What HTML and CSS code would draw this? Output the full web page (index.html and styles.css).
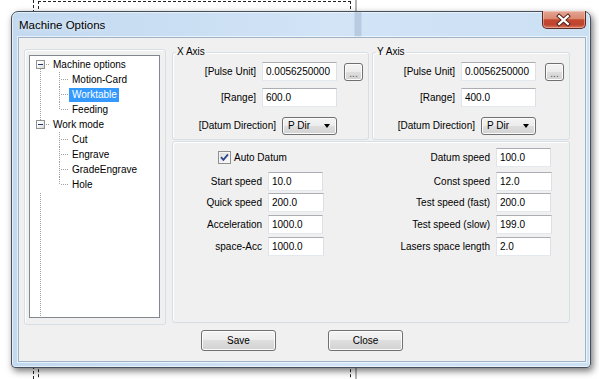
FILE: index.html
```html
<!DOCTYPE html>
<html>
<head>
  <title>Machine Options</title>
  <link rel="stylesheet" href="styles.css">
</head>
<body>
  <div class="desk">
    <div class="sheet"></div>
    <div class="sheet-margin"></div>
    <div class="sheet-edge"></div>

    <div class="window">
      <div class="titlebar">
        <span class="title">Machine Options</span>
        <button class="close-btn" title="Close">
          <svg width="44" height="18" viewBox="0 0 44 18">
            <path d="M17.5 5 L26.5 13 M26.5 5 L17.5 13" stroke="#4a1f18" stroke-width="4.2" stroke-linecap="square"/>
            <path d="M17.5 5 L26.5 13 M26.5 5 L17.5 13" stroke="#ffffff" stroke-width="2.2" stroke-linecap="square"/>
          </svg>
        </button>
      </div>

      <div class="client">
        <div class="main">
          <div class="tree-frame">
            <div class="tree">
              <div class="node">
                <div class="row"><span class="expander"></span><span class="stub"></span><span class="label">Machine options</span></div>
                <div class="kids">
                  <div class="row"><span class="branch"></span><span class="label">Motion-Card</span></div>
                  <div class="row"><span class="branch"></span><span class="label selected">Worktable</span></div>
                  <div class="row"><span class="branch"></span><span class="label">Feeding</span></div>
                </div>
              </div>
              <div class="node">
                <div class="row"><span class="expander"></span><span class="stub"></span><span class="label">Work mode</span></div>
                <div class="kids">
                  <div class="row"><span class="branch"></span><span class="label">Cut</span></div>
                  <div class="row"><span class="branch"></span><span class="label">Engrave</span></div>
                  <div class="row"><span class="branch"></span><span class="label">GradeEngrave</span></div>
                  <div class="row"><span class="branch"></span><span class="label">Hole</span></div>
                </div>
              </div>
            </div>
          </div>

          <div class="settings">
            <div class="axes">
              <fieldset class="group axis axis-x">
                <legend>X Axis</legend>
                <div class="field">
                  <label>[Pulse Unit]</label>
                  <input class="text-box wide" type="text" value="0.0056250000">
                  <button class="more-btn">...</button>
                </div>
                <div class="field">
                  <label>[Range]</label>
                  <input class="text-box wide" type="text" value="600.0">
                  <span class="btn-slot"></span>
                </div>
                <div class="field field-combo">
                  <label>[Datum Direction]</label>
                  <div class="combo">P Dir<span class="arrow"></span></div>
                  <span class="btn-slot"></span>
                </div>
              </fieldset>

              <fieldset class="group axis axis-y">
                <legend>Y Axis</legend>
                <div class="field">
                  <label>[Pulse Unit]</label>
                  <input class="text-box wide" type="text" value="0.0056250000">
                  <button class="more-btn">...</button>
                </div>
                <div class="field">
                  <label>[Range]</label>
                  <input class="text-box wide" type="text" value="400.0">
                  <span class="btn-slot"></span>
                </div>
                <div class="field field-combo">
                  <label>[Datum Direction]</label>
                  <div class="combo">P Dir<span class="arrow"></span></div>
                  <span class="btn-slot"></span>
                </div>
              </fieldset>
            </div>

            <div class="group speeds">
              <div class="check-cell">
                <span class="checkbox">
                  <svg width="9" height="9" viewBox="0 0 9 9"><path d="M1 4.2 L3.4 6.8 L8 1.4" fill="none" stroke="#2c4a8c" stroke-width="1.9"/></svg>
                </span>
                <span>Auto Datum</span>
              </div>
              <label class="r-label">Datum speed</label>
              <input class="text-box" type="text" value="100.0">

              <label>Start speed</label>
              <input class="text-box" type="text" value="10.0">
              <span></span>
              <label class="r-label">Const speed</label>
              <input class="text-box" type="text" value="12.0">

              <label>Quick speed</label>
              <input class="text-box" type="text" value="200.0">
              <span></span>
              <label class="r-label">Test speed (fast)</label>
              <input class="text-box" type="text" value="200.0">

              <label>Acceleration</label>
              <input class="text-box" type="text" value="1000.0">
              <span></span>
              <label class="r-label">Test speed (slow)</label>
              <input class="text-box" type="text" value="199.0">

              <label>space-Acc</label>
              <input class="text-box" type="text" value="1000.0">
              <span></span>
              <label class="r-label">Lasers space length</label>
              <input class="text-box" type="text" value="2.0">
            </div>
          </div>
        </div>

        <div class="actions">
          <button class="push-btn">Save</button>
          <button class="push-btn">Close</button>
        </div>
      </div>
    </div>
  </div>
</body>
</html>
```

FILE: styles.css
```css
body {
  margin: 0;
  background-color: #fff;
  font-family: "Liberation Sans", Arial, sans-serif;
  font-size: 10px;
  color: #000;
}

.desk {
  position: relative;
  width: 599px;
  height: 379px;
  overflow: hidden;
}

/* page outline of the document behind the dialog */
.sheet {
  position: absolute;
  left: 38px;
  top: 1px;
  width: 311px;
  height: 420px;
  border: 1px dashed #222;
  border-bottom: none;
}

.sheet-margin {
  position: absolute;
  left: 33px;
  top: 0;
  height: 379px;
  border-left: 1px dashed #222;
}

.sheet-edge {
  position: absolute;
  left: 355px;
  top: 0;
  width: 2px;
  height: 379px;
  background-color: #b4b4b4;
}

/* dialog window */
.window {
  position: absolute;
  left: 11px;
  top: 11px;
  width: 580px;
  height: 357px;
  box-sizing: border-box;
  border: 1px solid #46505c;
  border-radius: 7px 7px 4px 4px;
  background: linear-gradient(to right, #c2d9f0, #d2e4f6 55%, #cce0f4);
  box-shadow: 2px 3px 7px rgba(0, 0, 0, 0.55), inset 0 0 0 1px rgba(255, 255, 255, 0.55);
  display: flex;
  flex-direction: column;
}

.titlebar {
  height: 25px;
  display: flex;
  align-items: center;
  padding-left: 7px;
  background: linear-gradient(to right, transparent 342px, rgba(95, 115, 145, 0.22) 343px, rgba(95, 115, 145, 0.22) 349px, transparent 350px);
}

.title {
  font-size: 11.5px;
  color: #000;
  text-shadow: 0 0 6px rgba(255, 255, 255, 0.9);
}

.close-btn {
  margin-left: auto;
  margin-right: 4px;
  align-self: flex-start;
  margin-top: -1px;
  width: 44px;
  height: 18px;
  padding: 0;
  border: 1px solid #5b2a22;
  border-top: none;
  border-radius: 0 0 5px 5px;
  background: linear-gradient(#e4a796 0%, #d98870 45%, #c4472f 52%, #bf4430 80%, #d8755c 100%);
  box-shadow: inset 0 0 0 1px rgba(255, 220, 210, 0.45);
  display: flex;
  align-items: center;
  justify-content: center;
}

.close-btn svg {
  display: block;
  margin-left: -1px;
}

.client {
  flex: 1;
  margin: 0 4px 5px 6px;
  background-color: #f0f0f0;
  border: 1px solid #9fb2c6;
  box-shadow: 0 0 0 1px rgba(255, 255, 255, 0.6);
  display: flex;
  flex-direction: column;
}

.main {
  display: flex;
  align-items: flex-start;
}

/* tree view */
.tree-frame {
  margin: 11px 0 0 5px;
  width: 142px;
  height: 276px;
  box-sizing: border-box;
  border: 1px solid #d5dfe5;
  border-radius: 3px;
  box-shadow: inset 1px 1px #fff;
  padding: 5px 5px 6px 4px;
}

.tree {
  height: 100%;
  box-sizing: border-box;
  background-color: #fff;
  border: 1px solid #828790;
  padding-top: 1px;
  background-image: repeating-linear-gradient(to bottom, #a0a0a0 0 1px, transparent 1px 2px);
  background-repeat: no-repeat;
  background-position: 10px 8px;
  background-size: 1px 100%;
  background-origin: content-box;
}

.row {
  display: flex;
  align-items: center;
  height: 15px;
}

.node:last-child > .row {
  background: linear-gradient(#fff, #fff) no-repeat 0 100% / 100% 7px;
}

.node:last-child > .kids {
  background-color: #fff;
}

.expander {
  margin-left: 6px;
  width: 9px;
  height: 9px;
  box-sizing: border-box;
  border: 1px solid #919191;
  background: linear-gradient(135deg, #fff 30%, #d6d6d6);
  display: flex;
  align-items: center;
  justify-content: center;
}

.expander::before {
  content: "";
  width: 5px;
  height: 1px;
  background-color: #23386b;
}

.stub {
  width: 5px;
  align-self: stretch;
  background: repeating-linear-gradient(to right, #a0a0a0 0 1px, transparent 1px 2px) no-repeat 1px 7px / 4px 1px;
}

.branch {
  margin-left: 29px;
  width: 10px;
  align-self: stretch;
  background:
    repeating-linear-gradient(to right, #a0a0a0 0 1px, transparent 1px 2px) no-repeat 2px 7px / 8px 1px,
    repeating-linear-gradient(to bottom, #a0a0a0 0 1px, transparent 1px 2px) no-repeat 0 0 / 1px 100%;
}

.kids .row:last-child .branch {
  background:
    repeating-linear-gradient(to right, #a0a0a0 0 1px, transparent 1px 2px) no-repeat 2px 7px / 8px 1px,
    repeating-linear-gradient(to bottom, #a0a0a0 0 1px, transparent 1px 2px) no-repeat 0 0 / 1px 8px;
}

.label {
  line-height: 14px;
  padding: 0 2px 0 3px;
  white-space: nowrap;
}

.label.selected {
  background-color: #3399ff;
  color: #fff;
}

/* right side */
.settings {
  margin: 8px 0 0 6px;
  width: 398px;
}

.axes {
  display: flex;
  gap: 3px;
}

.group {
  border: 1px solid #d5dfe5;
  border-radius: 3px;
  box-shadow: inset 1px 1px #fff;
}

fieldset.group {
  margin: 0;
  min-width: 0;
  padding: 4px 5px 4px 0;
}

.group legend {
  margin-left: 3px;
  padding: 0 1px;
  line-height: 12px;
  font-size: 10px;
}

.axis-x {
  width: 197px;
  box-sizing: border-box;
  --slot-gap: 7px;
}

.axis-y {
  width: 198px;
  box-sizing: border-box;
  --slot-gap: 9px;
}

.field {
  display: flex;
  justify-content: flex-end;
  align-items: center;
  height: 19px;
}

.field + .field {
  margin-top: 7px;
}

.field.field-combo {
  margin-top: 9px;
}

.field label {
  margin-right: 6px;
  white-space: nowrap;
}

.text-box {
  box-sizing: border-box;
  height: 19px;
  width: 56px;
  margin: 0;
  padding: 0 3px;
  border: 1px solid;
  border-color: #abadb3 #dbdfe6 #e3e9ef #e2e3ea;
  background-color: #fff;
  font: inherit;
  color: #000;
  outline: none;
}

.text-box.wide {
  width: 75px;
}

.more-btn,
.push-btn,
.combo {
  box-sizing: border-box;
  border: 1px solid #707070;
  border-radius: 3px;
  background: linear-gradient(#f4f4f4 0%, #ececec 50%, #dedede 50%, #d2d2d2 100%);
  box-shadow: inset 0 0 0 1px #fbfbfb;
  font: inherit;
  color: #000;
}

.more-btn {
  margin-left: var(--slot-gap);
  width: 19px;
  height: 18px;
  padding: 0;
  color: #555;
  line-height: 20px;
}

.btn-slot {
  margin-left: var(--slot-gap);
  width: 19px;
}

.combo {
  width: 55px;
  height: 18px;
  display: flex;
  align-items: center;
  justify-content: space-between;
  padding: 0 6px 0 5px;
}

.arrow {
  width: 0;
  height: 0;
  border-top: 4px solid #000;
  border-left: 3.5px solid transparent;
  border-right: 3.5px solid transparent;
}

.speeds {
  margin-top: 1px;
  height: 182px;
  box-sizing: border-box;
  display: grid;
  grid-template-columns: 89px 56px 1fr 100px 55px;
  grid-template-rows: 24px 21px 22px 22px 19px;
  column-gap: 6px;
  align-items: start;
  padding: 6px 18px 0 0;
}

.speeds label {
  line-height: 19px;
  text-align: right;
  white-space: nowrap;
}

.speeds .r-label {
  grid-column: 4;
}

.speeds .text-box:nth-last-child(odd) {
  width: 55px;
}

.check-cell {
  grid-column: 1 / 4;
  height: 19px;
  display: flex;
  align-items: center;
  padding-left: 45px;
}

.checkbox {
  width: 13px;
  height: 13px;
  box-sizing: border-box;
  margin-right: 3px;
  border: 1px solid #8e8f8f;
  background: linear-gradient(135deg, #d8d8d8, #f6f6f6 70%);
  box-shadow: inset 0 0 0 1px #f4f4f4;
  display: flex;
  align-items: center;
  justify-content: center;
}

.checkbox svg {
  display: block;
}

.actions {
  display: flex;
  justify-content: center;
  gap: 52px;
  margin-top: 5px;
}

.push-btn {
  width: 75px;
  height: 21px;
  padding: 0;
  cursor: pointer;
}
```
